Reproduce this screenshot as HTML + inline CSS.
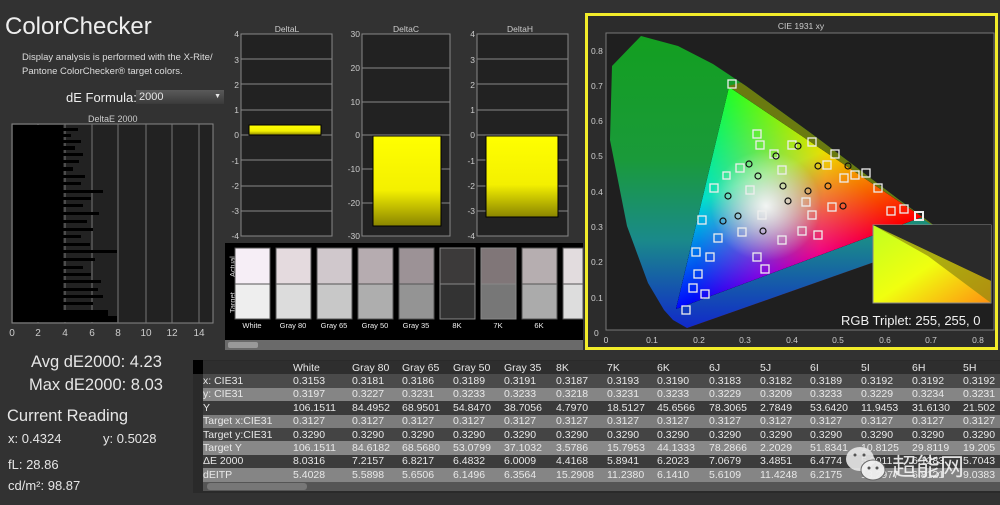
<!DOCTYPE html>
<html><head><meta charset="utf-8"><style>
*{margin:0;padding:0;box-sizing:border-box}
body{width:1000px;height:505px;background:#323232;font-family:"Liberation Sans","Noto Sans CJK SC",sans-serif;color:#e6e6e6;position:relative;overflow:hidden}
.a{position:absolute;white-space:nowrap}
table{border-collapse:collapse}
td{font-size:10.5px;height:13.4px;padding:0;white-space:nowrap;color:#e8e8e8}
</style></head><body>
<div class="a" style="left:5px;top:13px;font-size:24px;color:#eee">ColorChecker</div>
<div class="a" style="left:22px;top:51px;font-size:9.5px;line-height:14px;color:#ddd">Display analysis is performed with the X-Rite/<br>Pantone ColorChecker® target colors.</div>
<div class="a" style="left:66px;top:90px;font-size:13px;color:#eee">dE Formula:</div>
<div class="a" style="left:136px;top:90px;width:88px;height:14px;background:linear-gradient(#5a5a5a,#3a3a3a);font-size:11px;padding-left:3px;line-height:14px">2000<span style="position:absolute;right:3px;font-size:7px">▼</span></div>
<div class="a" style="left:88px;top:114px;font-size:9px;color:#ccc">DeltaE 2000</div>
<svg class="a" style="left:0;top:120px" width="225" height="225">
<rect x="12" y="4" width="201" height="199" fill="#222" stroke="#888"/>
<g stroke="#777"><line x1="38" y1="4" x2="38" y2="203"/><line x1="65" y1="4" x2="65" y2="203"/><line x1="92" y1="4" x2="92" y2="203"/><line x1="118" y1="4" x2="118" y2="203"/><line x1="146" y1="4" x2="146" y2="203"/><line x1="172" y1="4" x2="172" y2="203"/><line x1="199" y1="4" x2="199" y2="203"/></g>
<g fill="#000">
<rect x="13" y="5" width="50" height="196"/>
<rect x="13" y="8" width="65" height="3"/><rect x="13" y="14" width="58" height="3"/><rect x="13" y="20" width="68" height="3"/><rect x="13" y="26" width="62" height="4"/><rect x="13" y="33" width="70" height="3"/><rect x="13" y="40" width="66" height="3"/><rect x="13" y="47" width="60" height="4"/><rect x="13" y="55" width="72" height="3"/><rect x="13" y="62" width="68" height="3"/><rect x="13" y="70" width="90" height="3"/><rect x="13" y="77" width="78" height="3"/><rect x="13" y="84" width="70" height="3"/><rect x="13" y="92" width="86" height="3"/><rect x="13" y="100" width="74" height="3"/><rect x="13" y="108" width="80" height="3"/><rect x="13" y="115" width="68" height="3"/><rect x="13" y="123" width="77" height="3"/><rect x="13" y="130" width="104" height="3"/><rect x="13" y="138" width="82" height="3"/><rect x="13" y="146" width="70" height="3"/><rect x="13" y="153" width="78" height="3"/><rect x="13" y="160" width="88" height="3"/><rect x="13" y="168" width="85" height="3"/><rect x="13" y="175" width="90" height="3"/><rect x="13" y="182" width="80" height="3"/><rect x="13" y="190" width="95" height="6"/><rect x="13" y="196" width="104" height="6"/>
</g>
<g fill="#ccc" font-size="10" text-anchor="middle"><text x="12" y="216">0</text><text x="38" y="216">2</text><text x="65" y="216">4</text><text x="92" y="216">6</text><text x="118" y="216">8</text><text x="146" y="216">10</text><text x="172" y="216">12</text><text x="199" y="216">14</text></g>
</svg>
<div class="a" style="left:31px;top:353px;font-size:16.5px">Avg dE2000: 4.23</div>
<div class="a" style="left:29px;top:376px;font-size:16.5px">Max dE2000: 8.03</div>
<div class="a" style="left:7px;top:407px;font-size:16.5px">Current Reading</div>
<div class="a" style="left:8px;top:431px;font-size:13px">x: 0.4324</div>
<div class="a" style="left:103px;top:431px;font-size:13px">y: 0.5028</div>
<div class="a" style="left:8px;top:457px;font-size:13px">fL: 28.86</div>
<div class="a" style="left:8px;top:478px;font-size:13px">cd/m²: 98.87</div>

<svg class="a" style="left:225px;top:15px" width="360" height="340" font-size="8.5" fill="#ccc">
<rect x="0" y="228" width="358" height="100" fill="#000"/>
<g text-anchor="middle"><text x="62" y="17">DeltaL</text><text x="181" y="17">DeltaC</text><text x="295" y="17">DeltaH</text></g>
<g stroke="#888" fill="#222"><rect x="16" y="19" width="91" height="202"/><rect x="137" y="19" width="88" height="202"/><rect x="252" y="19" width="91" height="202"/></g>
<g stroke="#888"><line x1="16" y1="44" x2="107" y2="44"/><line x1="16" y1="69" x2="107" y2="69"/><line x1="16" y1="95" x2="107" y2="95"/><line x1="16" y1="120" x2="107" y2="120"/><line x1="16" y1="145" x2="107" y2="145"/><line x1="16" y1="171" x2="107" y2="171"/><line x1="16" y1="196" x2="107" y2="196"/>
<line x1="137" y1="53" x2="225" y2="53"/><line x1="137" y1="87" x2="225" y2="87"/><line x1="137" y1="120" x2="225" y2="120"/><line x1="137" y1="154" x2="225" y2="154"/><line x1="137" y1="188" x2="225" y2="188"/>
<line x1="252" y1="44" x2="343" y2="44"/><line x1="252" y1="69" x2="343" y2="69"/><line x1="252" y1="95" x2="343" y2="95"/><line x1="252" y1="120" x2="343" y2="120"/><line x1="252" y1="145" x2="343" y2="145"/><line x1="252" y1="171" x2="343" y2="171"/><line x1="252" y1="196" x2="343" y2="196"/></g>
<defs><linearGradient id="yb" x1="0" y1="0" x2="0" y2="1"><stop offset="0" stop-color="#ffff00"/><stop offset=".6" stop-color="#f4f000"/><stop offset="1" stop-color="#8a8500"/></linearGradient></defs>
<rect x="24" y="110" width="72" height="10" fill="url(#yb)" stroke="#000"/>
<rect x="148" y="121" width="68" height="90" fill="url(#yb)" stroke="#000"/>
<rect x="261" y="121" width="72" height="81" fill="url(#yb)" stroke="#000"/>
<g text-anchor="end"><text x="14" y="22">4</text><text x="14" y="48">3</text><text x="14" y="73">2</text><text x="14" y="98">1</text><text x="14" y="123">0</text><text x="14" y="149">-1</text><text x="14" y="174">-2</text><text x="14" y="199">-3</text><text x="14" y="224">-4</text>
<text x="135" y="22">30</text><text x="135" y="56">20</text><text x="135" y="90">10</text><text x="135" y="123">0</text><text x="135" y="157">-10</text><text x="135" y="191">-20</text><text x="135" y="224">-30</text>
<text x="250" y="22">4</text><text x="250" y="48">3</text><text x="250" y="73">2</text><text x="250" y="98">1</text><text x="250" y="123">0</text><text x="250" y="149">-1</text><text x="250" y="174">-2</text><text x="250" y="199">-3</text><text x="250" y="224">-4</text></g>
<g font-size="7.5" fill="#ddd" transform="rotate(-90)"><text x="-262" y="10">Actual</text><text x="-298" y="10">Target</text></g>
<g stroke="#555">
<rect x="10" y="233" width="35" height="36" fill="#f6eef6"/><rect x="10" y="269" width="35" height="35" fill="#eeeeee"/>
<rect x="51" y="233" width="35" height="36" fill="#e4dade"/><rect x="51" y="269" width="35" height="35" fill="#dcdcdc"/>
<rect x="92" y="233" width="35" height="36" fill="#d0c8cc"/><rect x="92" y="269" width="35" height="35" fill="#c8c8c8"/>
<rect x="133" y="233" width="35" height="36" fill="#b6acb0"/><rect x="133" y="269" width="35" height="35" fill="#aeaeae"/>
<rect x="174" y="233" width="35" height="36" fill="#9c9296"/><rect x="174" y="269" width="35" height="35" fill="#949494"/>
<rect x="215" y="233" width="35" height="36" fill="#3c3a3a" stroke="#888"/><rect x="215" y="269" width="35" height="35" fill="#333" stroke="#888"/>
<rect x="256" y="233" width="35" height="36" fill="#807678" stroke="#888"/><rect x="256" y="269" width="35" height="35" fill="#777" stroke="#888"/>
<rect x="297" y="233" width="35" height="36" fill="#b6aeb0"/><rect x="297" y="269" width="35" height="35" fill="#ababab"/>
<rect x="338" y="233" width="20" height="36" fill="#e2dcde"/><rect x="338" y="269" width="20" height="35" fill="#dddddd"/></g>
<g font-size="7.5" fill="#eee" text-anchor="middle"><text x="27" y="313">White</text><text x="68" y="313">Gray 80</text><text x="109" y="313">Gray 65</text><text x="150" y="313">Gray 50</text><text x="191" y="313">Gray 35</text><text x="232" y="313">8K</text><text x="273" y="313">7K</text><text x="314" y="313">6K</text></g>
<rect x="0" y="325" width="358" height="10" fill="#6a6a6a"/><rect x="3" y="327" width="30" height="6" fill="#999" rx="2"/>
</svg>

<div class="a" style="left:585px;top:13px;width:413px;height:337px;border:3px solid #f2ec2a;background:#2c2c2c"></div>
<svg class="a" style="left:588px;top:16px" width="407" height="331" font-size="8.5">
<text x="213" y="13" fill="#ccc" text-anchor="middle">CIE 1931 xy</text>
<rect x="18" y="17" width="388" height="297" fill="#1f1f1f" stroke="#777"/>
<defs>
<clipPath id="hs"><path d="M99 312 L85 304 L76 294 L60 267 L39 210 L22 124 L24 50 L53 20 L90 30 L125 48 L158 70 L191 94 L224 118 L256 142 L285 164 L310 183 L328 196 L360 220 Z"/></clipPath>
<linearGradient id="og" x1="0" y1="0" x2="0" y2="1"><stop offset="0" stop-color="#12a01c"/><stop offset=".45" stop-color="#1a9a3a"/><stop offset=".7" stop-color="#1a8a8a"/><stop offset="1" stop-color="#1020d0"/></linearGradient>
<linearGradient id="gG" gradientUnits="userSpaceOnUse" x1="141" y1="71" x2="211" y2="247"><stop offset="0" stop-color="#00ff00"/><stop offset=".5" stop-color="#00e000"/><stop offset="1" stop-color="#000"/></linearGradient>
<linearGradient id="gR" gradientUnits="userSpaceOnUse" x1="334" y1="201" x2="114" y2="182"><stop offset="0" stop-color="#ff0000"/><stop offset=".45" stop-color="#f00000"/><stop offset="1" stop-color="#000"/></linearGradient>
<linearGradient id="gB" gradientUnits="userSpaceOnUse" x1="88" y1="293" x2="237" y2="136"><stop offset="0" stop-color="#0000ff"/><stop offset=".4" stop-color="#0000e0"/><stop offset="1" stop-color="#000"/></linearGradient>
<radialGradient id="wh" gradientUnits="userSpaceOnUse" cx="178" cy="190" r="55"><stop offset="0" stop-color="#fff" stop-opacity=".9"/><stop offset="1" stop-color="#fff" stop-opacity="0"/></radialGradient>
<linearGradient id="ins" x1="0" y1="0" x2="1" y2="1"><stop offset="0" stop-color="#c0ff20"/><stop offset=".5" stop-color="#f0ff10"/><stop offset="1" stop-color="#ff9010"/></linearGradient>
</defs>
<g clip-path="url(#hs)">
<rect x="0" y="0" width="400" height="320" fill="url(#og)"/>
<path d="M99 312 L360 220 L330 330 Z" fill="#a01040"/>
<path d="M140 70 L360 220 L400 0 Z" fill="#6a7a10"/>
</g>
<g style="isolation:isolate">
<polygon points="141,71 334,201 88,293" fill="#000"/>
<polygon points="141,71 334,201 88,293" fill="url(#gG)" style="mix-blend-mode:screen"/>
<polygon points="141,71 334,201 88,293" fill="url(#gR)" style="mix-blend-mode:screen"/>
<polygon points="141,71 334,201 88,293" fill="url(#gB)" style="mix-blend-mode:screen"/>
<polygon points="141,71 334,201 88,293" fill="url(#wh)"/>
</g>
<g fill="none" stroke="#eee" stroke-width="1.3">
<rect x="140" y="64" width="8" height="8"/><rect x="165" y="114" width="8" height="8"/><rect x="168" y="125" width="8" height="8"/><rect x="135" y="156" width="7" height="7"/><rect x="110" y="200" width="8" height="8"/><rect x="104" y="232" width="8" height="8"/><rect x="106" y="254" width="8" height="8"/><rect x="94" y="290" width="8" height="8"/><rect x="113" y="274" width="8" height="8"/><rect x="101" y="268" width="8" height="8"/><rect x="118" y="237" width="8" height="8"/><rect x="126" y="218" width="8" height="8"/><rect x="150" y="212" width="8" height="8"/><rect x="165" y="237" width="8" height="8"/><rect x="173" y="249" width="8" height="8"/><rect x="190" y="220" width="8" height="8"/><rect x="210" y="211" width="8" height="8"/><rect x="226" y="215" width="8" height="8"/><rect x="214" y="182" width="8" height="8"/><rect x="235" y="145" width="8" height="8"/><rect x="252" y="158" width="8" height="8"/><rect x="263" y="155" width="8" height="8"/><rect x="274" y="153" width="8" height="8"/><rect x="286" y="168" width="8" height="8"/><rect x="299" y="191" width="8" height="8"/><rect x="312" y="189" width="8" height="8"/><rect x="327" y="196" width="8" height="8" stroke-width="2"/><rect x="240" y="187" width="8" height="8"/><rect x="220" y="195" width="8" height="8"/><rect x="200" y="125" width="8" height="8"/><rect x="220" y="122" width="8" height="8"/><rect x="243" y="134" width="8" height="8"/><rect x="148" y="148" width="8" height="8"/><rect x="190" y="150" width="8" height="8"/><rect x="182" y="134" width="8" height="8"/><rect x="158" y="170" width="8" height="8"/><rect x="122" y="168" width="8" height="8"/><rect x="170" y="195" width="8" height="8"/></g>
<g fill="none" stroke="#111" stroke-width="1.2"><circle cx="161" cy="148" r="3"/><circle cx="170" cy="160" r="3"/><circle cx="188" cy="140" r="3"/><circle cx="195" cy="170" r="3"/><circle cx="210" cy="130" r="3"/><circle cx="230" cy="150" r="3"/><circle cx="240" cy="170" r="3"/><circle cx="255" cy="190" r="3"/><circle cx="150" cy="200" r="3"/><circle cx="140" cy="180" r="3"/><circle cx="175" cy="215" r="3"/><circle cx="135" cy="205" r="3"/><circle cx="200" cy="185" r="3"/><circle cx="220" cy="175" r="3"/><circle cx="260" cy="150" r="3"/></g>
<rect x="285" y="209" width="118" height="78" fill="url(#ins)" stroke="#888"/>
<path d="M285 209 L403 265 L403 209 Z" fill="#2a2a2a"/>
<path d="M285 209 L403 265 L403 287 L340 240 Z" fill="#908a10" opacity=".7"/>
<text x="253" y="309" font-size="13" fill="#f2f2f2">RGB Triplet: 255, 255, 0</text>
<g fill="#ccc"><text x="3" y="38">0.8</text><text x="3" y="73">0.7</text><text x="3" y="108">0.6</text><text x="3" y="143">0.5</text><text x="3" y="179">0.4</text><text x="3" y="214">0.3</text><text x="3" y="249">0.2</text><text x="3" y="285">0.1</text><text x="6" y="320">0</text></g>
<g fill="#ccc" text-anchor="middle"><text x="18" y="327">0</text><text x="64" y="327">0.1</text><text x="111" y="327">0.2</text><text x="157" y="327">0.3</text><text x="204" y="327">0.4</text><text x="250" y="327">0.5</text><text x="297" y="327">0.6</text><text x="343" y="327">0.7</text><text x="390" y="327">0.8</text></g>
</svg>

<div class="a" style="left:193px;top:360px;width:807px;height:133px;background:#2a2a2a"></div>
<div class="a" style="left:193px;top:360px;width:10px;height:14px;background:#000"></div>
<table class="a" style="left:203px;top:361px;width:820px">
<colgroup><col style="width:90px"><col style="width:59px"><col style="width:50px"><col style="width:51px"><col style="width:51px"><col style="width:52px"><col style="width:51px"><col style="width:50px"><col style="width:52px"><col style="width:51px"><col style="width:50px"><col style="width:51px"><col style="width:51px"><col style="width:51px"><col></colgroup>
<tr style="background:#2e2e2e"><td></td><td>White</td><td>Gray 80</td><td>Gray 65</td><td>Gray 50</td><td>Gray 35</td><td>8K</td><td>7K</td><td>6K</td><td>6J</td><td>5J</td><td>6I</td><td>5I</td><td>6H</td><td>5H</td></tr>
<tr style="background:#4a4a4a"><td>x: CIE31</td><td>0.3153</td><td>0.3181</td><td>0.3186</td><td>0.3189</td><td>0.3191</td><td>0.3187</td><td>0.3193</td><td>0.3190</td><td>0.3183</td><td>0.3182</td><td>0.3189</td><td>0.3192</td><td>0.3192</td><td>0.3192</td></tr>
<tr style="background:#858585"><td>y: CIE31</td><td>0.3197</td><td>0.3227</td><td>0.3231</td><td>0.3233</td><td>0.3233</td><td>0.3218</td><td>0.3231</td><td>0.3233</td><td>0.3229</td><td>0.3209</td><td>0.3233</td><td>0.3229</td><td>0.3234</td><td>0.3231</td></tr>
<tr style="background:#3a3a3a"><td>Y</td><td>106.1511</td><td>84.4952</td><td>68.9501</td><td>54.8470</td><td>38.7056</td><td>4.7970</td><td>18.5127</td><td>45.6566</td><td>78.3065</td><td>2.7849</td><td>53.6420</td><td>11.9453</td><td>31.6130</td><td>21.502</td></tr>
<tr style="background:#7c7c7c"><td>Target x:CIE31</td><td>0.3127</td><td>0.3127</td><td>0.3127</td><td>0.3127</td><td>0.3127</td><td>0.3127</td><td>0.3127</td><td>0.3127</td><td>0.3127</td><td>0.3127</td><td>0.3127</td><td>0.3127</td><td>0.3127</td><td>0.3127</td></tr>
<tr style="background:#444"><td>Target y:CIE31</td><td>0.3290</td><td>0.3290</td><td>0.3290</td><td>0.3290</td><td>0.3290</td><td>0.3290</td><td>0.3290</td><td>0.3290</td><td>0.3290</td><td>0.3290</td><td>0.3290</td><td>0.3290</td><td>0.3290</td><td>0.3290</td></tr>
<tr style="background:#888"><td>Target Y</td><td>106.1511</td><td>84.6182</td><td>68.5680</td><td>53.0799</td><td>37.1032</td><td>3.5786</td><td>15.7953</td><td>44.1333</td><td>78.2866</td><td>2.2029</td><td>51.8341</td><td>10.8125</td><td>29.8119</td><td>19.205</td></tr>
<tr style="background:#3c3c3c"><td>ΔE 2000</td><td>8.0316</td><td>7.2157</td><td>6.8217</td><td>6.4832</td><td>6.0009</td><td>4.4168</td><td>5.8941</td><td>6.2023</td><td>7.0679</td><td>3.4851</td><td>6.4774</td><td>5.9011</td><td>6.1283</td><td>5.7043</td></tr>
<tr style="background:#858585"><td>dEITP</td><td>5.4028</td><td>5.5898</td><td>5.6506</td><td>6.1496</td><td>6.3564</td><td>15.2908</td><td>11.2380</td><td>6.1410</td><td>5.6109</td><td>11.4248</td><td>6.2175</td><td>13.2977</td><td>6.8121</td><td>9.0383</td></tr>
</table>
<div class="a" style="left:203px;top:482px;width:797px;height:9px;background:#555"></div>
<div class="a" style="left:207px;top:483px;width:100px;height:7px;background:#777;border-radius:3px"></div>
<svg class="a" style="left:843px;top:442px" width="50" height="45">
<ellipse cx="17" cy="17" rx="14" ry="12" fill="#e8e8e8" opacity=".9"/>
<ellipse cx="30" cy="28" rx="12" ry="10" fill="#f0f0f0" stroke="#666" opacity=".95"/>
<circle cx="12" cy="13" r="1.5" fill="#555"/><circle cx="21" cy="13" r="1.5" fill="#555"/>
<circle cx="26" cy="26" r="1.5" fill="#555"/><circle cx="34" cy="26" r="1.5" fill="#555"/>
</svg>
<div class="a" style="left:892px;top:447px;font-size:24px;color:#f4f4f4;opacity:.9">超能网</div>
</body></html>
